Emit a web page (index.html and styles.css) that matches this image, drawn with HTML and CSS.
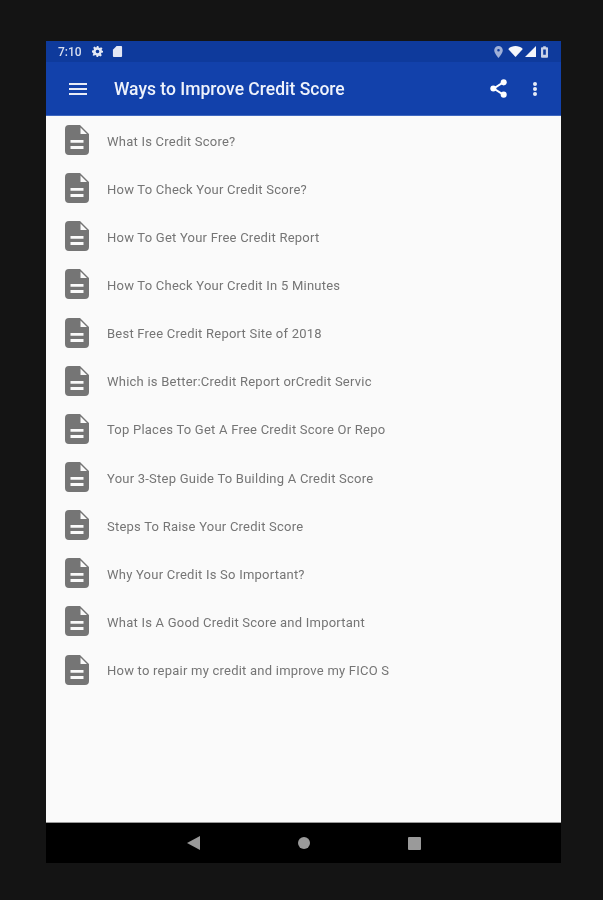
FILE: index.html
```html
<!DOCTYPE html>
<html lang="en">

<head>
  <meta charset="UTF-8" />
  <title>Ways to Improve Credit Score</title>
  <link rel="stylesheet" href="styles.css">
</head>

<body>
  <svg class="defs" width="0" height="0">
    <symbol id="doc" viewBox="0 0 24 30">
      <path fill="#757575" fill-rule="evenodd" d="M4 0h11l9 9v17a4 4 0 0 1-4 4H4a4 4 0 0 1-4-4V4a4 4 0 0 1 4-4zM15.500 2.500V9h6.500zM5.500 15v2.800h13V15zM5.500 21v3h13v-3z"/>
    </symbol>
  </svg>

  <div class="tablet">
    <div class="status-bar">
      <div class="status-left">
        <span class="clock">7:10</span>
        <svg class="status-icon" viewBox="0 0 12 12"><path fill="#e4e8f4" fill-rule="evenodd" d="M5 0h2l.3 1.700 1.200.5L10 1.300l1.400 1.400-.9 1.500.5 1.200L12 5v2l-1.700.3-.5 1.200.9 1.500-1.400 1.400-1.500-.9-1.200.5L7 12H5l-.3-1.700-1.200-.5-1.500.9L.6 10l.9-1.500L1 7.300 0 7V5l1.700-.3.5-1.200-.9-1.500L2.700.6l1.500.9 1.200-.5zM6 4a2 2 0 1 0 0 4 2 2 0 0 0 0-4z"/></svg>
        <svg class="status-icon" viewBox="0 0 10 12"><path fill="#e4e8f4" d="M4 0h5a1 1 0 0 1 1 1v10a1 1 0 0 1-1 1H1a1 1 0 0 1-1-1V4z"/></svg>
      </div>
      <div class="status-right">
        <svg class="status-pin" viewBox="0 0 10 14"><path fill="#9fb0d8" fill-rule="evenodd" d="M5 0a5 5 0 0 1 5 5c0 3.500-5 9-5 9S0 8.500 0 5a5 5 0 0 1 5-5zm0 3.500a1.500 1.500 0 1 0 0 3 1.500 1.500 0 0 0 0-3z"/></svg>
        <svg class="status-wifi" viewBox="0 0 16 12"><path fill="#f4f6fb" d="M0 3.200C4.500-1 11.500-1 16 3.200L8 12z"/></svg>
        <svg class="status-signal" viewBox="0 0 11 11"><path fill="#f4f6fb" d="M11 0v11H0z"/></svg>
        <svg class="status-battery" viewBox="0 0 8 13"><path fill="#c9d2e8" fill-rule="evenodd" d="M2.500 0h3v1H7a1 1 0 0 1 1 1v10a1 1 0 0 1-1 1H1a1 1 0 0 1-1-1V2a1 1 0 0 1 1-1h1.500zM2.500 3.500v6h3v-6z"/></svg>
      </div>
    </div>

    <header class="app-bar">
      <div class="menu-icon"><span></span><span></span><span></span></div>
      <h1 class="app-title">Ways to Improve Credit Score</h1>
      <svg class="share-icon" viewBox="0 0 18 20">
        <path stroke="#fff" stroke-width="2" fill="none" d="M14 3.500 4 10l10 6.500"/>
        <circle cx="14.500" cy="3.500" r="3.200" fill="#fff"/>
        <circle cx="3.500" cy="10" r="3.200" fill="#fff"/>
        <circle cx="14.500" cy="16.500" r="3.200" fill="#fff"/>
      </svg>
      <div class="more-icon"><span></span><span></span><span></span></div>
    </header>

    <ul class="topic-list">
      <li class="topic"><svg class="doc-icon"><use href="#doc"/></svg><span class="topic-text">What Is Credit Score?</span></li>
      <li class="topic"><svg class="doc-icon"><use href="#doc"/></svg><span class="topic-text">How To Check Your Credit Score?</span></li>
      <li class="topic"><svg class="doc-icon"><use href="#doc"/></svg><span class="topic-text">How To Get Your Free Credit Report</span></li>
      <li class="topic"><svg class="doc-icon"><use href="#doc"/></svg><span class="topic-text">How To Check Your Credit In 5 Minutes</span></li>
      <li class="topic"><svg class="doc-icon"><use href="#doc"/></svg><span class="topic-text">Best Free Credit Report Site of 2018</span></li>
      <li class="topic"><svg class="doc-icon"><use href="#doc"/></svg><span class="topic-text">Which is Better:Credit Report orCredit Servic</span></li>
      <li class="topic"><svg class="doc-icon"><use href="#doc"/></svg><span class="topic-text">Top Places To Get A Free Credit Score Or Repo</span></li>
      <li class="topic"><svg class="doc-icon"><use href="#doc"/></svg><span class="topic-text">Your 3-Step Guide To Building A Credit Score</span></li>
      <li class="topic"><svg class="doc-icon"><use href="#doc"/></svg><span class="topic-text">Steps To Raise Your Credit Score</span></li>
      <li class="topic"><svg class="doc-icon"><use href="#doc"/></svg><span class="topic-text">Why Your Credit Is So Important?</span></li>
      <li class="topic"><svg class="doc-icon"><use href="#doc"/></svg><span class="topic-text">What Is A Good Credit Score and Important</span></li>
      <li class="topic"><svg class="doc-icon"><use href="#doc"/></svg><span class="topic-text">How to repair my credit and improve my FICO S</span></li>
    </ul>

    <nav class="nav-bar">
      <svg class="nav-back" viewBox="0 0 13 14"><path fill="#9a9a9a" d="M13 0v14L0 7z"/></svg>
      <span class="nav-home"></span>
      <span class="nav-recent"></span>
    </nav>
  </div>
</body>

</html>
```

FILE: styles.css
```css
* {
  box-sizing: border-box;
}

body {
  margin: 0;
  height: 900px;
  background-color: #141414;
  font-family: Roboto, "Liberation Sans", sans-serif;
  padding: 41px 42px 0 46px;
  overflow: hidden;
}

.defs {
  position: absolute;
}

.tablet {
  height: 822px;
  display: flex;
  flex-direction: column;
  /* the source is a soft, upscaled capture */
  filter: blur(0.5px);
}

.status-bar {
  height: 21px;
  flex-shrink: 0;
  background-color: #0e3a9c;
  display: flex;
  align-items: center;
  justify-content: space-between;
  padding: 0 13px 0 12px;
}

.status-left,
.status-right {
  display: flex;
  align-items: center;
}

.clock {
  color: #d7deef;
  font-size: 12px;
  font-weight: 500;
  margin-right: 10px;
}

.status-icon {
  width: 11px;
  height: 11px;
  margin-right: 9px;
}

.status-pin {
  width: 9px;
  height: 12px;
  margin-right: 5px;
}

.status-wifi {
  width: 15px;
  height: 11px;
  margin-right: 2px;
}

.status-signal {
  width: 11px;
  height: 11px;
  margin-right: 5px;
}

.status-battery {
  width: 7px;
  height: 12px;
}

.app-bar {
  height: 54px;
  flex-shrink: 0;
  background-color: #1241ab;
  border-bottom: 1px solid #3f68c0;
  display: flex;
  align-items: center;
  padding: 0 24px 0 23px;
  color: #fff;
}

.menu-icon {
  width: 18px;
  display: flex;
  flex-direction: column;
  gap: 3px;
  margin-right: 27px;
}

.menu-icon span {
  height: 2px;
  background-color: #e8ecf7;
}

.app-title {
  flex: 1;
  margin: 0;
  font-size: 17.5px;
  font-weight: 500;
  color: #eef2fb;
}

.share-icon {
  width: 17px;
  height: 19px;
  margin-right: 26px;
}

.more-icon {
  display: flex;
  flex-direction: column;
  gap: 1px;
}

.more-icon span {
  width: 4px;
  height: 4px;
  border-radius: 50%;
  background-color: #e8ecf7;
}

.topic-list {
  flex: 1;
  margin: 0;
  padding: 0;
  list-style: none;
  background-color: #fafafa;
  border-bottom: 1px solid #9a9a9a;
}

.topic {
  height: 48.15px;
  display: flex;
  align-items: center;
  padding-left: 19px;
  font-size: 13px;
  letter-spacing: 0.23px;
  color: #757575;
  white-space: nowrap;
}

.topic-text {
  padding-top: 2px;
}

.doc-icon {
  width: 24px;
  height: 30px;
  margin-right: 18px;
  flex-shrink: 0;
}

.nav-bar {
  height: 40px;
  flex-shrink: 0;
  background-color: #000;
  display: flex;
  align-items: center;
  justify-content: center;
  gap: 98px;
}

.nav-back {
  width: 13px;
  height: 14px;
}

.nav-home {
  width: 12px;
  height: 12px;
  border-radius: 50%;
  background-color: #9a9a9a;
}

.nav-recent {
  width: 13px;
  height: 13px;
  border-radius: 1px;
  background-color: #9a9a9a;
}
```
